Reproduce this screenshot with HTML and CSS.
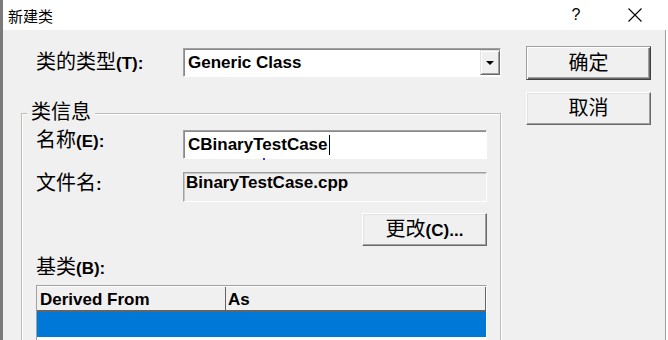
FILE: index.html
```html
<!DOCTYPE html>
<html lang="zh-CN">
<head>
    <meta charset="UTF-8">
    <title>新建类</title>
    <link rel="stylesheet" href="styles.css">
</head>
<body>

<div class="window">
    <!-- Title bar -->
    <div class="titlebar">
        <span class="title">新建类</span>
        <span class="tb-btn help">?</span>
        <span class="tb-btn close">
            <svg width="14" height="14" viewBox="0 0 14 14"><path d="M0.5 0.5 L13.5 13.5 M13.5 0.5 L0.5 13.5" stroke="#000" stroke-width="1.1" fill="none"/></svg>
        </span>
    </div>

    <!-- Dialog body -->
    <div class="dialog">
        <div class="main">
            <div class="type-row">
                <label class="label"><span class="zh">类的类型</span>(T):</label>
                <div class="combo">
                    <span class="combo-text">Generic Class</span>
                    <span class="combo-btn"><span class="arrow"></span></span>
                </div>
            </div>

            <div class="group">
                <div class="legend zh">类信息</div>

                <div class="field name-row">
                    <label class="label"><span class="zh">名称</span>(E):</label>
                    <div class="edit">CBinaryTestCase<span class="caret"></span><span class="dot"></span></div>
                </div>

                <div class="field file-row">
                    <label class="label"><span class="zh">文件名</span>:</label>
                    <div class="edit readonly">BinaryTestCase.cpp</div>
                </div>

                <div class="btn-row">
                    <button class="btn change"><span class="zh">更改</span>(C)...</button>
                </div>

                <div class="base-label"><span class="zh">基类</span>(B):</div>

                <div class="list">
                    <div class="list-head">
                        <div class="col col-from">Derived From</div>
                        <div class="col col-as">As</div>
                    </div>
                    <div class="list-row selected"></div>
                </div>
            </div>
        </div>

        <div class="side">
            <button class="btn btn-default"><span class="zh">确定</span></button>
            <button class="btn"><span class="zh">取消</span></button>
        </div>
    </div>
</div>

</body>
</html>
```

FILE: styles.css
```css
body {
    margin: 0;
    width: 668px;
    height: 340px;
    overflow: hidden;
    background-color: #ffffff;
    font-family: "Liberation Sans", "Noto Sans CJK SC", sans-serif;
    font-weight: bold;
    font-size: 17px;
    color: #000;
}

.zh {
    font-family: "Noto Sans CJK SC", sans-serif;
    font-weight: normal;
    font-size: 20px;
}

.window {
    height: 340px;
    border-left: 3px solid #7a7a7a;
    display: flex;
    flex-direction: column;
}

.titlebar {
    height: 30px;
    flex-shrink: 0;
    display: flex;
    align-items: center;
    padding: 0 18px 0 5px;
    background-color: #fff;
}

.title {
    flex: 1;
    font-family: "Noto Sans CJK SC", sans-serif;
    font-weight: normal;
    font-size: 15px;
}

.tb-btn {
    width: 30px;
    display: flex;
    justify-content: center;
}

.help {
    margin-right: 29px;
    font-family: "Liberation Sans", sans-serif;
    font-weight: normal;
    font-size: 16px;
}

.dialog {
    flex: 1;
    min-height: 0;
    overflow: hidden;
    display: flex;
    margin-right: 2px;
    padding: 16px 0 0 18px;
    background-color: #f0f0f0;
    border-right: 1px solid #a0a0a0;
}

.main {
    width: 480px;
    flex-shrink: 0;
}

.side {
    width: 125px;
    margin-left: 25px;
    display: flex;
    flex-direction: column;
    gap: 12px;
}

.label {
    width: 147px;
    flex-shrink: 0;
    line-height: 20px;
}

.type-row {
    margin-top: 2px;
    height: 29px;
    padding-left: 15px;
    display: flex;
    align-items: center;
}

.combo {
    width: 318px;
    height: 29px;
    box-sizing: border-box;
    display: flex;
    background-color: #fff;
    border: 1px solid;
    border-color: #a0a0a0 #fff #fff #a0a0a0;
    box-shadow: inset 1px 1px 0 #8a8a8a;
}

.combo-text {
    flex: 1;
    padding-left: 4px;
    line-height: 27px;
}

.combo-btn {
    width: 20px;
    margin: 1px 0;
    box-sizing: border-box;
    display: flex;
    align-items: center;
    justify-content: center;
    background-color: #f0f0f0;
    border: 1px solid;
    border-color: #e3e3e3 #696969 #696969 #e3e3e3;
    box-shadow: inset 1px 1px 0 #fff, inset -1px -1px 0 #a0a0a0;
}

.arrow {
    width: 0;
    height: 0;
    border-left: 4px solid transparent;
    border-right: 4px solid transparent;
    border-top: 4px solid #000;
}

.group {
    margin-top: 36px;
    height: 300px;
    padding: 0 13px 0 14px;
    border: 1px solid #bcbcbc;
    box-shadow: inset 1px 1px 0 #fff, 1px 1px 0 #fff;
}

.legend {
    width: fit-content;
    margin: -13px 0 0 -9px;
    padding: 0 4px;
    line-height: 20px;
    background-color: #f0f0f0;
}

.field {
    display: flex;
    align-items: flex-start;
}

.name-row {
    margin-top: 9px;
}

.name-row .label {
    margin-top: -1px;
}

.file-row {
    margin-top: 13px;
}

.edit {
    position: relative;
    flex: 1;
    height: 29px;
    box-sizing: border-box;
    display: flex;
    align-items: center;
    padding-left: 4px;
    background-color: #fff;
    border: 1px solid;
    border-color: #a0a0a0 #fff #fff #a0a0a0;
    box-shadow: inset 1px 1px 0 #8a8a8a;
    line-height: 20px;
}

.caret {
    width: 1px;
    height: 20px;
    margin-left: 1px;
    background-color: #000;
}

.dot {
    position: absolute;
    left: 79px;
    top: 27px;
    width: 2px;
    height: 2px;
    background-color: #3a3aff;
}

.edit.readonly {
    height: 30px;
    align-items: flex-start;
    padding-left: 2px;
    background-color: #f0f0f0;
    box-shadow: inset 1px 1px 0 #c8c8c8;
}

.btn-row {
    margin-top: 11px;
    display: flex;
    justify-content: flex-end;
}

.btn {
    width: 125px;
    height: 33px;
    padding: 0;
    font: inherit;
    color: #000;
    line-height: 20px;
    background-color: #f0f0f0;
    border: 1px solid;
    border-color: #fff #696969 #696969 #fff;
    box-shadow: inset -1px -1px 0 #a0a0a0, inset 1px 1px 0 #e3e3e3;
}

.btn-default {
    height: 34px;
    border-color: #a0a0a0 #404040 #404040 #a0a0a0;
    box-shadow: inset 1px 1px 0 #fff, inset -1px -1px 0 #696969, inset -2px -2px 0 #a0a0a0;
}

.base-label {
    margin-top: 10px;
    line-height: 20px;
}

.list {
    margin-top: 6px;
    height: 200px;
    background-color: #fff;
    border: 1px solid;
    border-color: #a0a0a0 #fff #fff #a0a0a0;
}

.list-head {
    height: 26px;
    box-sizing: border-box;
    display: flex;
    background-color: #f0f0f0;
    border-top: 1px solid #fff;
    border-bottom: 2px solid #646464;
}

.col {
    box-sizing: border-box;
    padding-top: 3px;
    line-height: 20px;
    border-right: 1px solid #646464;
}

.col-from {
    width: 189px;
    padding-left: 3px;
}

.col-as {
    width: 260px;
    padding-left: 2px;
}

.list-row {
    height: 25px;
}

.list-row.selected {
    background-color: #0078d7;
}
```
